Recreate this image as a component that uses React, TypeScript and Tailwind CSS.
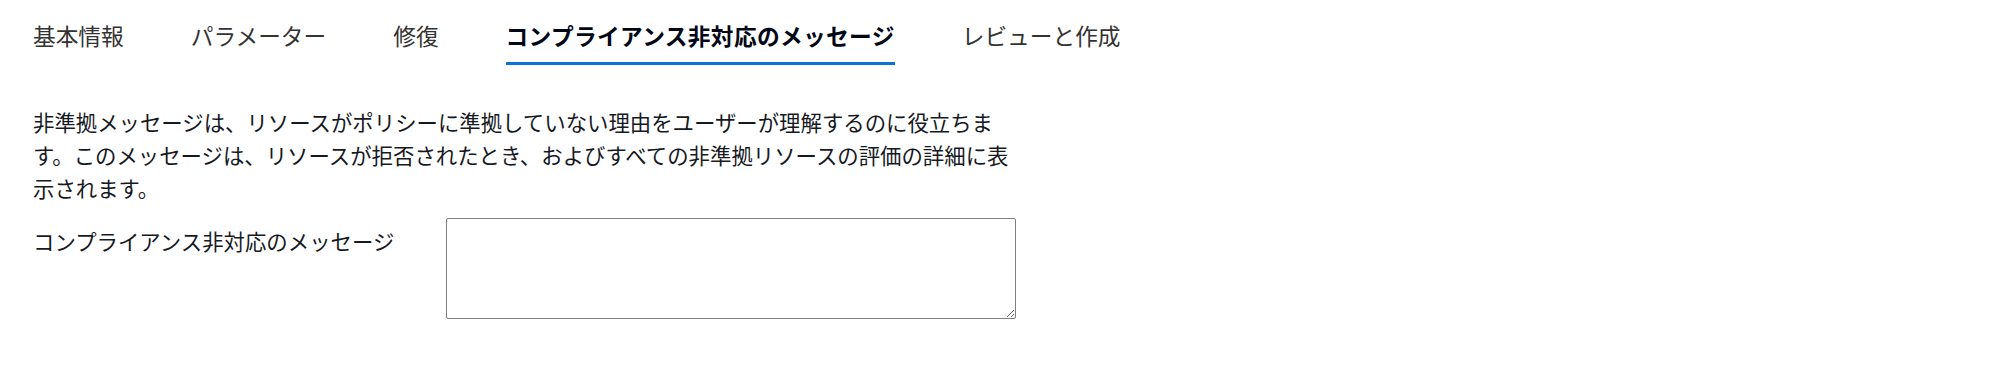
import React from "react"

const tabs = [
  { label: "基本情報", active: false },
  { label: "パラメーター", active: false },
  { label: "修復", active: false },
  { label: "コンプライアンス非対応のメッセージ", active: true },
  { label: "レビューと作成", active: false },
]

const font = "font-['Noto_Sans_CJK_JP','Noto_Sans',sans-serif]"

function Tabs() {
  return (
    <div className="flex flex-row gap-[67px] pl-[33px] pt-[20px]">
      {tabs.map((tab) => (
        <button
          key={tab.label}
          type="button"
          className="flex flex-col items-stretch"
        >
          <span
            className={
              tab.active
                ? "text-[22.7px] leading-[32px] font-bold tracking-[0.35px] text-[#000716] whitespace-nowrap"
                : "text-[22.7px] leading-[32px] font-normal text-[#333] whitespace-nowrap"
            }
          >
            {tab.label}
          </span>
          <span
            className={
              tab.active
                ? "mt-[10px] h-[3px] w-full bg-[#0972d3]"
                : "mt-[10px] h-[3px] w-full bg-transparent"
            }
          />
        </button>
      ))}
    </div>
  )
}

export default function App() {
  return (
    <div className={`min-h-[386px] w-full bg-white ${font}`}>
      <Tabs />
      <div className="pl-[33px] pt-[40px]">
        <p className="max-w-[992px] text-[21.4px] leading-[33px] text-[#16191f]">
          非準拠メッセージは、リソースがポリシーに準拠していない理由をユーザーが理解するのに役立ちます。このメッセージは、リソースが拒否されたとき、およびすべての非準拠リソースの評価の詳細に表示されます。
        </p>
        <div className="mt-[14px] grid grid-cols-[413px_570px]">
          <label
            htmlFor="non-compliance-message"
            className="pt-[6px] text-[21.4px] leading-[33px] text-[#16191f] whitespace-nowrap"
          >
            コンプライアンス非対応のメッセージ
          </label>
          <textarea
            id="non-compliance-message"
            className="h-[101px] w-[570px] rounded-[2px] border border-[#7f7f7f] bg-white px-2 py-1 text-[21.4px] text-[#16191f] outline-none"
          />
        </div>
      </div>
    </div>
  )
}
